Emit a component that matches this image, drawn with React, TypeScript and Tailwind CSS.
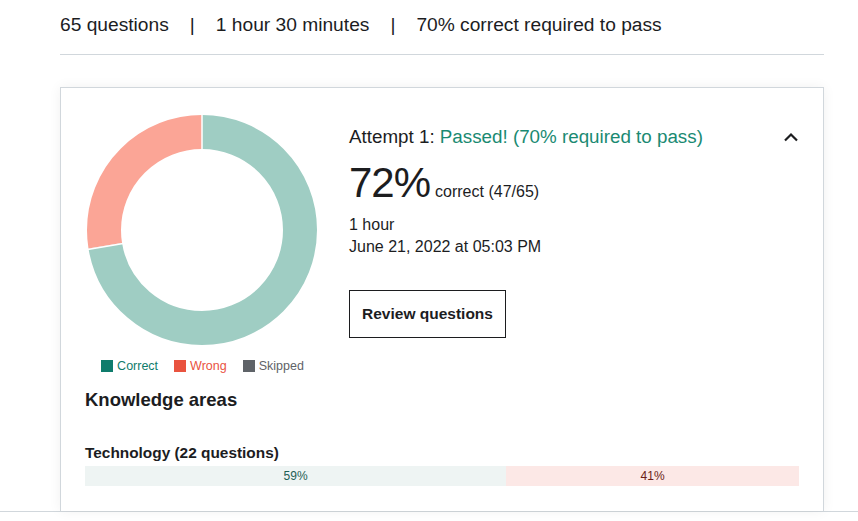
import React from 'react';

const R = 98;
const C = 2 * Math.PI * R;
const correctLen = (47 / 65) * C;
const wrongLen = (18 / 65) * C;

const Donut = () => {
    const endAngle = (47 / 65) * 2 * Math.PI;
    const ex = 115 + Math.sin(endAngle) * 116;
    const ey = 115 - Math.cos(endAngle) * 116;
    const ix = 115 + Math.sin(endAngle) * 80;
    const iy = 115 - Math.cos(endAngle) * 80;
    return (
        <svg width="230" height="230" viewBox="0 0 230 230">
            <g transform="rotate(-90 115 115)">
                <circle cx="115" cy="115" r={R} fill="none" stroke="#9fcdc3" strokeWidth="34" strokeDasharray={`${correctLen} ${C}`} />
                <circle cx="115" cy="115" r={R} fill="none" stroke="#fba596" strokeWidth="34" strokeDasharray={`${wrongLen} ${C}`} strokeDashoffset={-correctLen} />
            </g>
            <line x1="115" y1="0" x2="115" y2="34" stroke="#fff" strokeWidth="1.5" />
            <line x1={ix} y1={iy} x2={ex} y2={ey} stroke="#fff" strokeWidth="1.5" />
        </svg>
    );
};

const Legend = ({ color, text, label }: { color: string; text: string; label: string }) => (
    <div className="flex items-center gap-1">
        <span className={`w-3 h-3 ${color}`} />
        <span className={`text-[12.5px] ${text}`}>{label}</span>
    </div>
);

export default function App() {
    return (
        <div className="bg-white font-['Liberation_Sans',Arial,sans-serif] text-[#1c1d1f] w-[858px] h-[521px] overflow-hidden">
            <div className="border-b border-[#d1d7dc]">
                <div className="px-[60px]">
                    <div className="w-[764px] flex items-center h-[55px] border-b border-[#d1d7dc] text-[19.2px] pb-[4px]">
                        <span>65 questions</span>
                        <span className="mx-[21px]">|</span>
                        <span>1 hour 30 minutes</span>
                        <span className="mx-[21px]">|</span>
                        <span>70% correct required to pass</span>
                    </div>

                    <div className="mt-[32px] w-[764px] h-[424px] border border-b-0 border-[#d1d7dc] shadow-[0_0_12px_rgba(0,0,0,0.06)] px-6 pt-[27px]">
                        <div className="flex">
                            <div className="flex flex-col items-center ml-[2px]">
                                <Donut />
                                <div className="flex gap-4 mt-[12px] ml-[1px]">
                                    <Legend color="bg-[#0f7c6c]" text="text-[#0f7c6c]" label="Correct" />
                                    <Legend color="bg-[#e9533f]" text="text-[#e9533f]" label="Wrong" />
                                    <Legend color="bg-[#5f6368]" text="text-[#5f6368]" label="Skipped" />
                                </div>
                            </div>

                            <div className="ml-[32px] flex-1 pt-[10px]">
                                <div className="flex items-center justify-between">
                                    <div className="text-[18.8px] leading-6">
                                        Attempt 1: <span className="text-[#1a8a72]">Passed! (70% required to pass)</span>
                                    </div>
                                    <svg width="16" height="10" viewBox="0 0 16 10">
                                        <path d="M2 8.5 L8 2.5 L14 8.5" fill="none" stroke="#1c1d1f" strokeWidth="2.2" />
                                    </svg>
                                </div>
                                <div className="flex items-baseline mt-[10px]">
                                    <span className="text-[42px] leading-[48px] tracking-[-1px]">72%</span>
                                    <span className="text-[16px] ml-[5px]">correct (47/65)</span>
                                </div>
                                <div className="text-[16px] leading-[22px] mt-[7px]">1 hour</div>
                                <div className="text-[16px] leading-[22px]">June 21, 2022 at 05:03 PM</div>
                                <button className="mt-[32px] border border-[#1c1d1f] h-[48px] w-[157px] text-[15.5px] font-bold">
                                    Review questions
                                </button>
                            </div>
                        </div>

                        <h3 className="text-[18.5px] font-bold mt-[12px] leading-6">Knowledge areas</h3>

                        <div className="mt-[31px]">
                            <div className="text-[15.4px] font-bold leading-5">Technology (22 questions)</div>
                            <div className="flex h-[20px] mt-[3px] text-[12px]">
                                <div className="w-[59%] bg-[#eef4f3] text-[#1e6055] flex items-center justify-center">59%</div>
                                <div className="w-[41%] bg-[#fce8e6] text-[#6b1e17] flex items-center justify-center">41%</div>
                            </div>
                        </div>
                    </div>
                </div>
            </div>
        </div>
    );
}
